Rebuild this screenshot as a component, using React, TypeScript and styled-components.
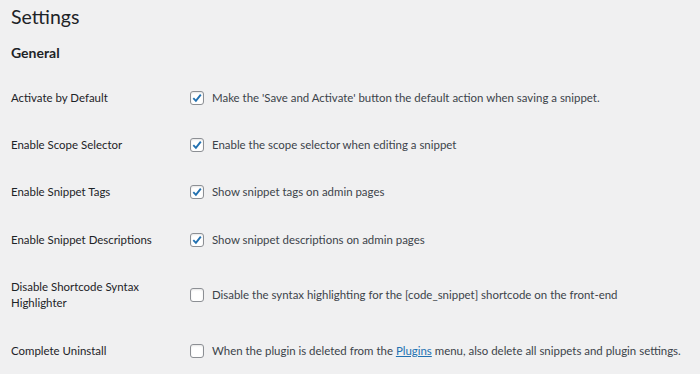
import { FC } from "react";
import styled, { createGlobalStyle } from "styled-components";

const GlobalStyle = createGlobalStyle`
  html, body {
    margin: 0;
    background: #f0f0f1;
  }
  body {
    font-family: Lato, "Noto Sans", sans-serif;
    color: #1d2327;
  }
`;

const Page = styled.div`
  padding: 4px 11px 0 11px;
`;

const Title = styled.h1`
  margin: 0;
  font-size: 19.5px;
  font-weight: 400;
  line-height: 26px;
  color: #1d2327;
`;

const SectionTitle = styled.h2`
  margin: 13px 0 0 0;
  font-size: 14px;
  font-weight: 700;
  line-height: 20px;
  color: #1d2327;
`;

const Table = styled.div`
  margin-top: 11px;
  display: flex;
  flex-direction: column;
`;

const Row = styled.div`
  display: grid;
  grid-template-columns: 179px 1fr;
  align-items: center;
  padding: 15.7px 0;
`;

const Label = styled.div`
  font-size: 11.45px;
  line-height: 16px;
  color: #1d2327;
  padding-right: 20px;
`;

const Field = styled.label`
  display: flex;
  align-items: center;
  gap: 8px;
  font-size: 11.45px;
  line-height: 16px;
  color: #3c434a;
  white-space: nowrap;
`;

const Box = styled.span`
  flex: none;
  width: 12px;
  height: 12px;
  border: 1px solid #8c8f94;
  border-radius: 3px;
  background: #fff;
  display: flex;
  align-items: center;
  justify-content: center;
  box-shadow: inset 0 1px 2px rgba(0, 0, 0, 0.1);
`;

const Link = styled.a`
  color: #2271b1;
  text-decoration: underline;
`;

const Check: FC<{ checked: boolean }> = ({ checked }) => (
  <Box>
    {checked && (
      <svg width="12" height="12" viewBox="0 0 12 12">
        <path d="M2.3 6.2 L4.9 8.8 L9.8 2.6" fill="none" stroke="#2271b1" strokeWidth="1.9" />
      </svg>
    )}
  </Box>
);

type Setting = { label: string; checked: boolean; text: React.ReactNode };

const settings: Setting[] = [
  {
    label: "Activate by Default",
    checked: true,
    text: "Make the 'Save and Activate' button the default action when saving a snippet.",
  },
  {
    label: "Enable Scope Selector",
    checked: true,
    text: "Enable the scope selector when editing a snippet",
  },
  {
    label: "Enable Snippet Tags",
    checked: true,
    text: "Show snippet tags on admin pages",
  },
  {
    label: "Enable Snippet Descriptions",
    checked: true,
    text: "Show snippet descriptions on admin pages",
  },
  {
    label: "Disable Shortcode Syntax Highlighter",
    checked: false,
    text: "Disable the syntax highlighting for the [code_snippet] shortcode on the front-end",
  },
  {
    label: "Complete Uninstall",
    checked: false,
    text: (
      <>
        When the plugin is deleted from the <Link href="#">Plugins</Link> menu, also delete all
        snippets and plugin settings.
      </>
    ),
  },
];

export default function App() {
  return (
    <>
      <GlobalStyle />
      <Page>
        <Title>Settings</Title>
        <SectionTitle>General</SectionTitle>
        <Table>
          {settings.map((s) => (
            <Row key={s.label}>
              <Label>{s.label}</Label>
              <Field>
                <Check checked={s.checked} />
                <span>{s.text}</span>
              </Field>
            </Row>
          ))}
        </Table>
      </Page>
    </>
  );
}
